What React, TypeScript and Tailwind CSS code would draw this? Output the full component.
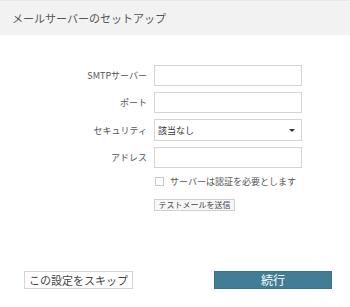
import React from 'react'

const font = "font-['Noto_Sans_CJK_JP',sans-serif]"

//Row
const Row: React.FC<{ label: string; children: React.ReactNode }> = ({ label, children }) => (
	<div className="flex items-center">
		<div className="w-[147px] text-right text-[9px] leading-none text-[#555]">{label}</div>
		<div className="ml-[7px] flex">{children}</div>
	</div>
)

const App: React.FC = () => {
	//Template
	return (
		<div className={`w-[350px] h-[307px] bg-white flex flex-col ${font}`}>
			<div className="h-[35px] bg-[#f2f2f2] border-t border-[#e9e9e9] flex items-center pl-[12px]">
				<h1 className="text-[11px] text-[#555]">メールサーバーのセットアップ</h1>
			</div>
			<div className="flex flex-col gap-[6px] mt-[30px]">
				<Row label="SMTPサーバー">
					<input className="block w-[148px] h-[21px] border border-[#d4d4d4] bg-white outline-none" />
				</Row>
				<Row label="ポート">
					<input className="block w-[148px] h-[21px] border border-[#d4d4d4] bg-white outline-none" />
				</Row>
				<Row label="セキュリティ">
					<div className="w-[148px] h-[22px] border border-[#d4d4d4] bg-white flex items-center justify-between pl-[3px] pr-[4px]">
						<span className="text-[9px] leading-none text-[#333]">該当なし</span>
						<span className="w-0 h-0 border-l-[3px] border-r-[3px] border-t-[3px] border-l-transparent border-r-transparent border-t-[#333] mr-[2px]" />
					</div>
				</Row>
				<Row label="アドレス">
					<input className="block w-[148px] h-[21px] border border-[#d4d4d4] bg-white outline-none" />
				</Row>
			</div>
			<div className="flex items-center h-[14px] ml-[155px] mt-[6px]">
				<span className="w-[9px] h-[9px] border border-[#c8c8c8] bg-white" />
				<span className="ml-[6px] text-[9px] leading-none text-[#555]">サーバーは認証を必要とします</span>
			</div>
			<div className="flex ml-[154px] mt-[11px]">
				<button className="w-[81px] h-[12px] border border-[#cfcfcf] bg-[#f7f7f7] text-[8px] leading-none text-[#444] p-0">テストメールを送信</button>
			</div>
			<div className="flex items-center mt-[60px] pl-[24px]">
				<button className="w-[109px] h-[18px] border border-[#d4d4d4] bg-white text-[11px] leading-none text-[#444]">この設定をスキップ</button>
				<button className="ml-[81px] w-[118px] h-[18px] bg-[#417d94] border border-[#3b7389] text-[12px] leading-none text-white">続行</button>
			</div>
		</div>
	)
}

export default App
